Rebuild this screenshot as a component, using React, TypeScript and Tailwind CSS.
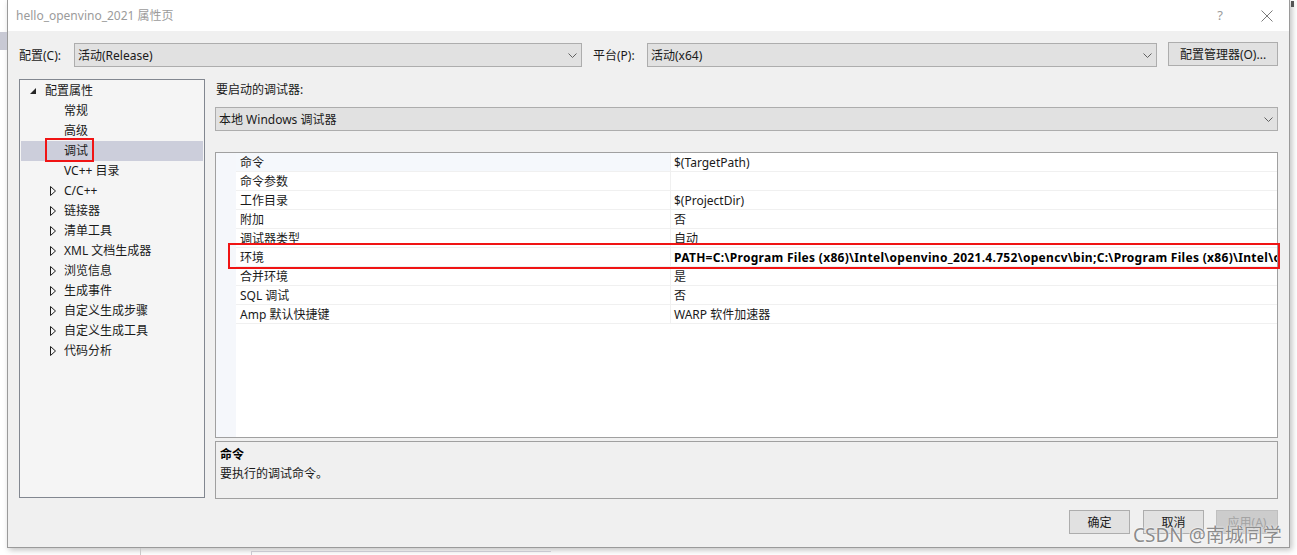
import React from "react";

const FONT = "font-['Noto_Sans','Noto_Sans_CJK_SC',sans-serif]";

type TreeItem = { label: string; level: 0 | 1; expander?: "open" | "closed"; selected?: boolean };

const treeItems: TreeItem[] = [
  { label: "配置属性", level: 0, expander: "open" },
  { label: "常规", level: 1 },
  { label: "高级", level: 1 },
  { label: "调试", level: 1, selected: true },
  { label: "VC++ 目录", level: 1 },
  { label: "C/C++", level: 1, expander: "closed" },
  { label: "链接器", level: 1, expander: "closed" },
  { label: "清单工具", level: 1, expander: "closed" },
  { label: "XML 文档生成器", level: 1, expander: "closed" },
  { label: "浏览信息", level: 1, expander: "closed" },
  { label: "生成事件", level: 1, expander: "closed" },
  { label: "自定义生成步骤", level: 1, expander: "closed" },
  { label: "自定义生成工具", level: 1, expander: "closed" },
  { label: "代码分析", level: 1, expander: "closed" },
];

const props: { name: string; value: string; bold?: boolean }[] = [
  { name: "命令", value: "$(TargetPath)" },
  { name: "命令参数", value: "" },
  { name: "工作目录", value: "$(ProjectDir)" },
  { name: "附加", value: "否" },
  { name: "调试器类型", value: "自动" },
  {
    name: "环境",
    value:
      "PATH=C:\\Program Files (x86)\\Intel\\openvino_2021.4.752\\opencv\\bin;C:\\Program Files (x86)\\Intel\\openvino_2021.4.752\\deployment_tools",
    bold: true,
  },
  { name: "合并环境", value: "是" },
  { name: "SQL 调试", value: "否" },
  { name: "Amp 默认快捷键", value: "WARP 软件加速器" },
];

function Chevron() {
  return (
    <svg width="9" height="5" viewBox="0 0 9 5" className="shrink-0">
      <polyline points="0.5,0.5 4.5,4.5 8.5,0.5" fill="none" stroke="#606060" strokeWidth="1" />
    </svg>
  );
}

function Select({ text, className }: { text: string; className: string }) {
  return (
    <div
      className={`h-[24px] bg-[#e1e1e1] border border-[#adadad] flex items-center justify-between pl-[3px] pr-[4px] ${className}`}
    >
      <span className="pt-[2px]">{text}</span>
      <Chevron />
    </div>
  );
}

function Button({ text, disabled, className }: { text: string; disabled?: boolean; className: string }) {
  return (
    <div
      className={`h-[24px] border flex items-center justify-center pt-[2px] ${
        disabled ? "bg-[#cccccc] border-[#bfbfbf] text-[#a3a3a3]" : "bg-[#e1e1e1] border-[#adadad]"
      } ${className}`}
    >
      {text}
    </div>
  );
}

export default function App() {
  return (
    <div className={`w-[1297px] h-[555px] bg-white relative overflow-hidden text-[12px] text-[#1a1a1a] ${FONT}`}>
      {/* desktop behind the dialog */}
      <div className="absolute left-0 top-[32px] w-[7px] h-[18px] bg-[#c8c9d4]" />
      <div className="absolute left-[1291px] top-[1px] w-[3px] h-[6px] bg-[#555]" />
      <div className="absolute left-[140px] top-[548px] w-[1px] h-[7px] bg-[#c8c8c8]" />
      <div className="absolute left-[251px] top-[551px] w-[300px] h-[4px] border-l border-t border-[#c8c8d0]" />

      {/* dialog window */}
      <div className="ml-[7px] w-[1283px] h-[548px] border-x border-b border-[#9a9a9a] shadow-[2px_2px_6px_rgba(0,0,0,0.25)] flex flex-col">
        {/* title bar */}
        <div className="h-[31px] bg-white flex items-center pl-[8px] pr-[16px] text-[#9b9b9b]">
          <span>hello_openvino_2021 属性页</span>
          <span className="ml-auto mr-[38px] text-[13px]">?</span>
          <svg width="12" height="12" viewBox="0 0 12 12">
            <path d="M0.5 0.5 L11.5 11.5 M11.5 0.5 L0.5 11.5" stroke="#7a7a7a" strokeWidth="1" />
          </svg>
        </div>

        {/* body */}
        <div className="flex-1 bg-[#f0f0f0] px-[11px] pt-[12px] flex flex-col">
          <div className="h-[24px] flex items-center">
            <span className="w-[55px] pt-[2px]">配置(C):</span>
            <Select text="活动(Release)" className="w-[508px]" />
            <span className="w-[54px] ml-[11px] pt-[2px]">平台(P):</span>
            <Select text="活动(x64)" className="w-[510px]" />
            <Button text="配置管理器(O)..." className="ml-auto w-[110px] -mt-[2px]" />
          </div>

          <div className="mt-[12px] flex gap-[10px]">
            {/* tree */}
            <div className="w-[186px] shrink-0 h-[419px] border border-[#828790] bg-[#f5f5f5] flex flex-col pt-[1px]">
              {treeItems.map((it) => (
                <div
                  key={it.label}
                  className={`h-[20px] mx-[1px] flex items-center whitespace-nowrap ${it.selected ? "bg-[#cccedb]" : ""}`}
                >
                  <div
                    className={`flex items-center h-full shrink-0 ${
                      it.level === 0 ? "w-[24px] pl-[9px]" : "w-[43px] pl-[29px]"
                    }`}
                  >
                    {it.expander === "open" && (
                      <svg width="6" height="6" viewBox="0 0 6 6">
                        <polygon points="6,0 6,6 0,6" fill="#262626" />
                      </svg>
                    )}
                    {it.expander === "closed" && (
                      <svg width="6" height="10" viewBox="0 0 6 10">
                        <polygon points="0.5,0.5 5.5,5 0.5,9.5" fill="none" stroke="#1e1e1e" strokeWidth="1" />
                      </svg>
                    )}
                  </div>
                  <span>{it.label}</span>
                </div>
              ))}
            </div>

            {/* right side */}
            <div className="flex-1 min-w-0 flex flex-col">
              <div className="h-[20px] flex items-center pl-[1px] pt-[2px]">要启动的调试器:</div>
              <Select text="本地 Windows 调试器" className="mt-[8px] w-full" />

              <div className="mt-[21px] h-[286px] border border-[#a0a0a0] bg-white flex overflow-hidden">
                <div className="w-[20px] shrink-0 h-full bg-[#f5f7fb]" />
                <div className="flex-1 flex flex-col min-w-0">
                  {props.map((p, i) => (
                    <div key={p.name} className="h-[19px] flex border-b border-[#f0f0f0]">
                      <div
                        className={`w-[434px] shrink-0 pl-[4px] pt-[2px] flex items-center ${
                          i === 0 ? "bg-[#f5f8fc]" : ""
                        }`}
                      >
                        {p.name}
                      </div>
                      <div
                        className={`flex-1 min-w-0 border-l border-[#f0f0f0] pl-[3px] pt-[2px] flex items-center whitespace-nowrap overflow-hidden ${
                          p.bold ? "font-bold text-black tracking-[0.3px]" : ""
                        }`}
                      >
                        {p.value}
                      </div>
                    </div>
                  ))}
                </div>
              </div>

              <div className="mt-[3px] h-[58px] border border-[#a0a0a0] bg-[#f0f0f0] px-[4px] pt-[3px] flex flex-col">
                <div className="h-[19px] flex items-center font-bold text-black">命令</div>
                <div className="h-[19px] flex items-center">要执行的调试命令。</div>
              </div>
            </div>
          </div>

          <div className="mt-[11px] flex justify-end">
            <Button text="确定" className="w-[61px]" />
            <Button text="取消" className="w-[61px] ml-[13px]" />
            <Button text="应用(A)" disabled className="w-[62px] ml-[12px]" />
          </div>
        </div>
      </div>

      {/* red annotation boxes */}
      <div className="absolute left-[45px] top-[138px] w-[49px] h-[24px] border-2 border-[#f01414]" />
      <div className="absolute left-[228px] top-[243px] w-[1052px] h-[26px] border-2 border-[#f01414]" />

      {/* watermark */}
      <div className="absolute left-[1133px] top-[522px] text-[19px] leading-[26px] text-[#8c8c8c] [text-shadow:0_0_2px_#ffffff,0_0_1px_#ffffff]">
        CSDN @南城同学
      </div>
    </div>
  );
}
